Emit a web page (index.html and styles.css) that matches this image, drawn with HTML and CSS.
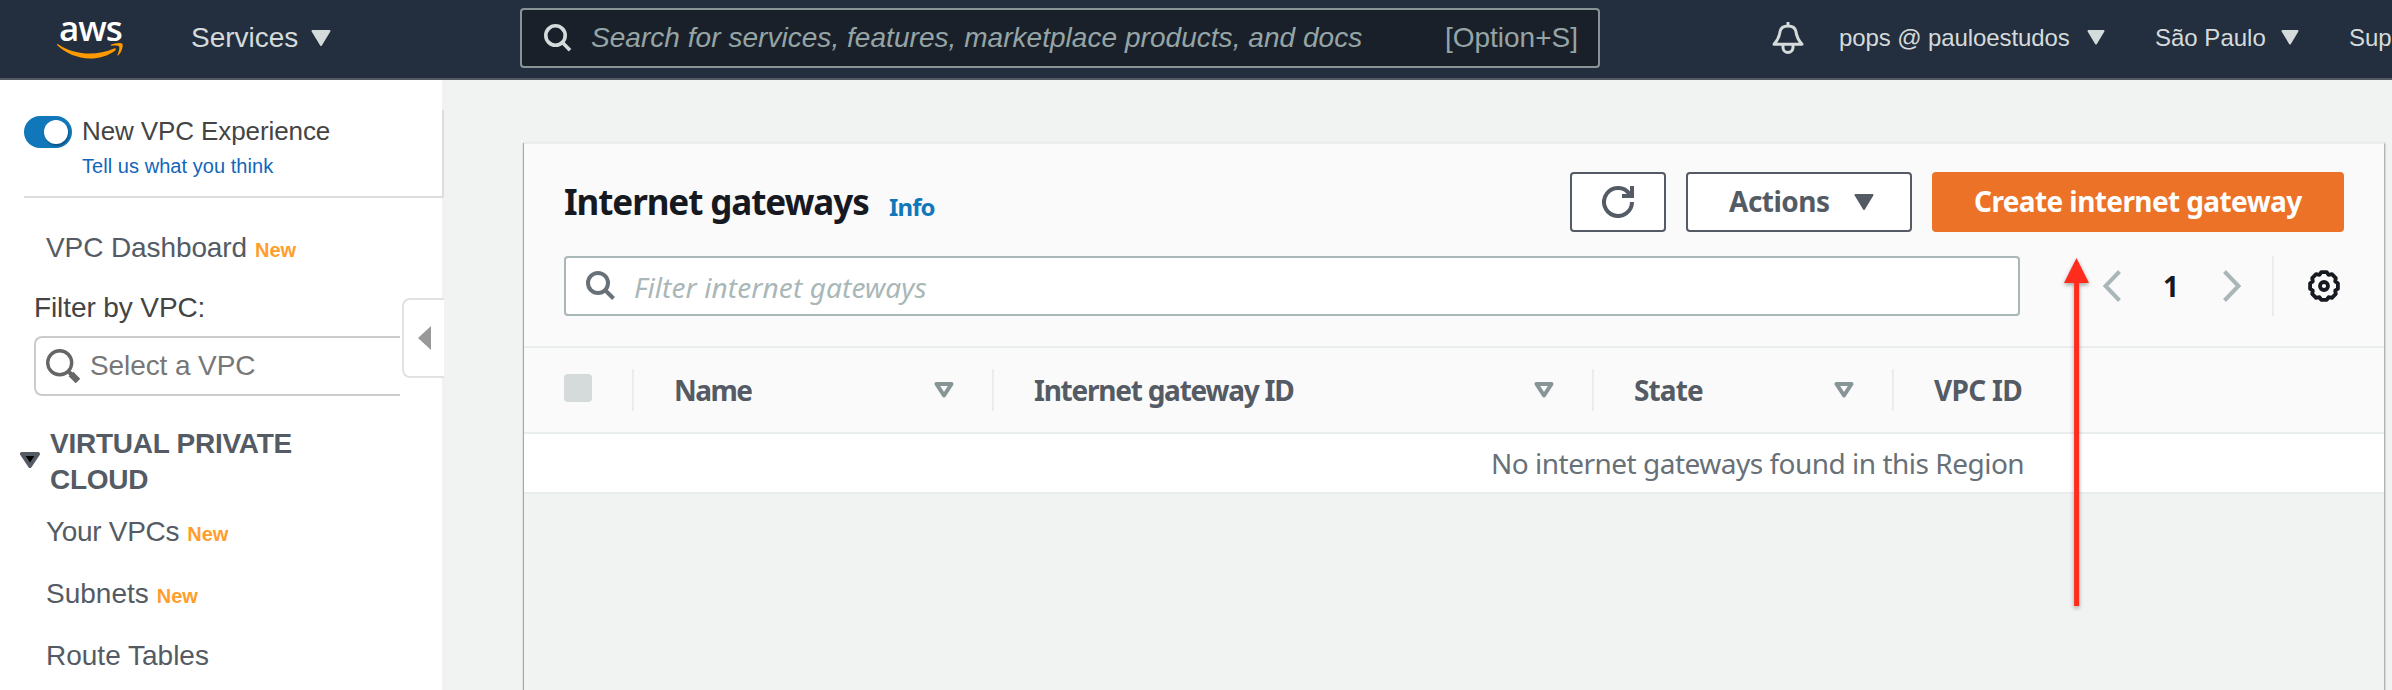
FILE: index.html
```html
<!DOCTYPE html>
<html lang="en">
<head>
<meta charset="utf-8">
<title>Internet gateways | VPC Management Console</title>
<link rel="stylesheet" href="styles.css">
</head>
<body>
<header class="nav">
  <a class="logo">
    <span class="logo-text">aws</span>
    <svg class="logo-smile" width="66" height="16" viewBox="0 0 66 16"><path fill="#f90" d="M.6 1C10 7.5 22 10.6 33 10.600 41 10.600 49.500 8.800 57 5.400c1.500-.6 2.600 1 1.200 2C51 12.800 42 15.400 33 15.400 20.500 15.400 9 10.500.3 2.300-.4 1.500-.1.600.6 1Z"/><path fill="#f90" d="M54 1.800C57 .2 64 -.6 65.300.8c1.300 1.700-.5 8.600-4 11.500-.6.5-1.100.200-.8-.4C61.500 9.500 63 4.600 62 3.400 61 2.100 57 2.500 54.300 2.700c-.7 0-.9-.5-.3-.9Z"/></svg>
  </a>
  <a class="services">Services<svg width="20" height="16" viewBox="0 0 20 16"><path class="caret" d="M1.500 1h17L10 15Z"/></svg></a>
  <div class="search">
    <svg width="28" height="28" viewBox="0 0 28 28" fill="none" stroke="#d5dbdb" stroke-width="3.600"><circle cx="11.500" cy="11.500" r="9.700"/><path d="M18 18l8 8.200"/></svg>
    <span class="search-hint">Search for services, features, marketplace products, and docs</span>
    <span class="search-key">[Option+S]</span>
  </div>
  <svg class="bell" width="32" height="32" viewBox="0 0 32 32" fill="none" stroke="#d5dbdb" stroke-width="3" stroke-linejoin="round"><path d="M16 0v4"/><path d="M2 22.200C6 18 7.500 14 8.200 9 9 5.500 12 4 16 4s7 1.500 7.800 5C24.500 14 26 18 30 22.200Z"/><path d="M11 23v2.500a5 5 0 0 0 10 0V23"/></svg>
  <a class="menu account"><span>pops @ pauloestudos</span><svg width="18" height="15" viewBox="0 0 18 15"><path class="caret" d="M1.500 1h15L9 13.500Z"/></svg></a>
  <a class="menu region"><span>São Paulo</span><svg width="18" height="15" viewBox="0 0 18 15"><path class="caret" d="M1.500 1h15L9 13.500Z"/></svg></a>
  <a class="menu support">Support</a>
</header>
<div class="body">
  <aside class="side">
    <div class="experience">
      <span class="toggle"><span class="knob"></span></span>
      <div>
        <div class="exp-title">New VPC Experience</div>
        <a class="exp-link">Tell us what you think</a>
      </div>
    </div>
    <a class="link dashboard">VPC Dashboard<b class="new">New</b></a>
    <div class="filter-label">Filter by VPC:</div>
    <div class="vpc-select">
      <svg width="34" height="34" viewBox="0 0 34 34" fill="none" stroke="#666"><circle cx="13.700" cy="13.700" r="12" stroke-width="3.400"/><path d="M22.500 22.500l4 4" stroke-width="4"/><path d="M25 25l7 7" stroke-width="6.500"/></svg>
      Select a VPC
    </div>
    <div class="group">
      <svg width="20" height="16" viewBox="0 0 20 16"><path d="M2 2h16L10 14Z" fill="#000" stroke="#545b64" stroke-width="4" stroke-linejoin="round"/></svg>
      <div>VIRTUAL PRIVATE<br>CLOUD</div>
    </div>
    <a class="link item vpcs">Your VPCs<b class="new">New</b></a>
    <a class="link item">Subnets<b class="new">New</b></a>
    <a class="link item">Route Tables</a>
    <div class="collapse"><svg width="13" height="24" viewBox="0 0 13 24"><path d="M13 0v24L0 12Z" fill="#999"/></svg></div>
  </aside>
  <main class="panel">
    <div class="panel-head">
      <div class="title-row">
        <h1>Internet gateways</h1><a class="info">Info</a>
        <button class="btn refresh"><svg width="32" height="32" viewBox="0 0 32 32" fill="none" stroke="#545b64" stroke-width="4"><path d="M30 16A14 14 0 1 1 27.500 8"/><path d="M30 0v10H20"/></svg></button>
        <button class="btn actions"><span>Actions</span><svg width="20" height="16" viewBox="0 0 20 16"><path d="M1.500 1h17L10 15Z" fill="#545b64" stroke="#545b64" stroke-width="2" stroke-linejoin="round"/></svg></button>
        <button class="btn create"><span>Create internet gateway</span></button>
      </div>
      <div class="tool-row">
        <div class="filter">
          <svg width="30" height="30" viewBox="0 0 30 30" fill="none" stroke="#687078" stroke-width="4"><circle cx="12" cy="12" r="10"/><path d="M19 19l8.500 8.500"/></svg>
          <span>Filter internet gateways</span>
        </div>
        <svg class="prev" width="18" height="32" viewBox="0 0 18 32" fill="none" stroke="#aab7b8" stroke-width="4"><path d="M16.500 1.500L2.500 16l14 14.500"/></svg>
        <span class="page">1</span>
        <svg class="next" width="18" height="32" viewBox="0 0 18 32" fill="none" stroke="#aab7b8" stroke-width="4"><path d="M1.500 1.500L15.500 16l-14 14.500"/></svg>
        <div class="gear"><svg width="32" height="32" viewBox="-16 -16 32 32" fill="none" stroke="#16191f" stroke-width="3.800" stroke-linejoin="round"><path d="M-2.700-13.900H2.700L4.600-11.200 7.900-11.800 11.800-7.900 11.200-4.600 13.900-2.700V2.700L11.200 4.600 11.800 7.900 7.900 11.800 4.600 11.200 2.700 13.900H-2.700L-4.600 11.200-7.900 11.800-11.800 7.900-11.200 4.600-13.900 2.700V-2.700L-11.200-4.600-11.800-7.900-7.900-11.800-4.600-11.200Z"/><circle r="4"/></svg></div>
      </div>
    </div>
    <div class="cols">
      <div class="col check"><span class="box"></span></div>
      <div class="col name"><span>Name</span><svg width="20" height="16" viewBox="0 0 20 16"><path class="sort" d="M2.500 2h15L10 13.500Z"/></svg></div>
      <div class="col gateway"><span>Internet gateway ID</span><svg width="20" height="16" viewBox="0 0 20 16"><path class="sort" d="M2.500 2h15L10 13.500Z"/></svg></div>
      <div class="col state"><span>State</span><svg width="20" height="16" viewBox="0 0 20 16"><path class="sort" d="M2.500 2h15L10 13.500Z"/></svg></div>
      <div class="col vpc"><span>VPC ID</span></div>
    </div>
    <div class="empty"><span>No internet gateways found in this Region</span></div>
  </main>
</div>
<svg class="arrow" width="36" height="364" viewBox="0 0 36 364"><path d="M17.500 4L30 29h-9.900v323h-5V29H5Z" fill="#ff2b1c"/></svg>
</body>
</html>
```
FILE: styles.css
```css
* { box-sizing: border-box; }
body {
  margin: 0;
  width: 2392px;
  height: 690px;
  overflow: hidden;
  position: relative;
  background: #f1f3f3;
  font-family: "Liberation Sans", Arial, sans-serif;
  font-size: 28px;
}
svg { display: block; flex: none; }

/* Top navigation */
.nav {
  display: flex;
  align-items: flex-start;
  height: 80px;
  background: #232f3e;
  border-bottom: 2px solid #545b64;
  color: #d5dbdb;
  white-space: nowrap;
  overflow: hidden;
}
.nav > * { flex: none; }
.caret { fill: #d5dbdb; stroke: #d5dbdb; stroke-width: 2; stroke-linejoin: round; }
.logo { width: 66px; margin-left: 57px; padding-top: 9px; }
.logo-text {
  display: block;
  height: 34px;
  padding-left: 2px;
  color: #fff;
  font: 600 35px/38px "Open Sans", sans-serif;
  letter-spacing: -1px;
}
.services { display: flex; align-items: center; gap: 13px; height: 76px; margin-left: 68px; width: 260px; }
.search {
  display: flex;
  align-items: center;
  width: 1080px;
  height: 60px;
  margin: 8px 0 0 69px;
  padding: 0 20px 0 22px;
  border: 2px solid #879596;
  border-radius: 4px;
  background: #1a202a;
  color: #95a5a6;
}
.search-hint { flex: 1; margin-left: 19px; font-style: italic; letter-spacing: .04px; }
.bell { margin: 22px 0 0 172px; }
.menu { display: flex; align-items: center; justify-content: space-between; height: 75px; font-size: 24px; }
.account { width: 266px; margin-left: 35px; letter-spacing: -.1px; }
.region { width: 144px; margin-left: 50px; }
.support { margin-left: 50px; }

/* Sidebar */
.body { display: flex; height: 610px; }
.side { position: relative; display: flow-root; width: 442px; height: 610px; flex: none; background: #fff; color: #545b64; }
.experience {
  display: flex;
  gap: 10px;
  width: 420px;
  height: 88px;
  margin: 30px 0 0 24px;
  border-right: 2px solid #ddd;
  border-bottom: 2px solid #ddd;
  background: #fff;
}
.toggle { width: 48px; height: 32px; margin-top: 6px; padding: 4px; border-radius: 16px; background: #1177bb; }
.knob { display: block; width: 24px; height: 24px; margin-left: 16px; border-radius: 50%; background: #fff; box-shadow: 1px 2px 2px rgba(0,0,0,.3); }
.exp-title { padding-top: 5px; color: #444; font-size: 26px; line-height: 32px; letter-spacing: -.1px; }
.exp-link { display: block; padding-top: 6px; color: #16b; font-size: 20px; line-height: 26px; letter-spacing: .05px; }
.link { display: block; height: 36px; margin-left: 46px; line-height: 36px; }
.new { margin-left: 8px; color: #ff9d2d; font-size: 20px; line-height: 20px; letter-spacing: 0; }
.dashboard { margin-top: 32px; letter-spacing: -.1px; }
.filter-label { margin: 24px 0 0 34px; color: #444; line-height: 36px; letter-spacing: -.1px; }
.vpc-select {
  display: flex;
  align-items: center;
  gap: 10px;
  width: 366px;
  height: 60px;
  margin: 10px 0 0 34px;
  padding-left: 10px;
  border: 2px solid #ccc;
  border-right: 0;
  border-radius: 8px 0 0 8px;
  color: #777;
  letter-spacing: -.1px;
}
.group { display: flex; gap: 10px; margin: 30px 0 0 20px; font-weight: bold; line-height: 36px; letter-spacing: -.25px; }
.group svg { margin-top: 26px; }
.item { margin-top: 16px; }
.vpcs { letter-spacing: -.3px; }
.item + .item { margin-top: 26px; }
.collapse {
  position: absolute;
  left: 402px;
  top: 218px;
  display: flex;
  align-items: center;
  width: 42px;
  height: 80px;
  padding-left: 14px;
  border: 2px solid #e2e2e2;
  border-right: 0;
  border-radius: 8px 0 0 8px;
  background: #fff;
}

/* Content panel */
.panel {
  width: 1860px;
  height: 560px;
  margin: 62px 0 0 82px;
  border-top: 2px solid #eaeded;
  box-shadow: 0 2px 2px rgba(0,28,36,.3), 1px 1px 2px rgba(0,28,36,.3), -1px 1px 1px rgba(0,28,36,.25);
  background: #f1f3f3;
  font-family: "Noto Sans", "Open Sans", sans-serif;
}
.panel-head { height: 204px; padding: 28px 40px 0; border-bottom: 2px solid #eaeded; background: #fafafa; }
.title-row { display: flex; height: 60px; white-space: nowrap; }
h1 { margin: 0; width: 325px; color: #16191f; font-size: 35px; line-height: 60px; letter-spacing: -1.080px; }
.info { flex: 1; color: #1177bb; font-size: 24px; font-weight: bold; line-height: 69px; letter-spacing: -.9px; }
.btn {
  display: flex;
  align-items: center;
  height: 60px;
  border: 2px solid #545b64;
  border-radius: 4px;
  background: #fff;
  color: #545b64;
  font: bold 28px/56px "Noto Sans", sans-serif;
}
.btn span { padding-bottom: 2px; }
.refresh { width: 96px; padding: 0 30px; }
.actions { width: 226px; margin-left: 20px; padding: 0 36px 0 41px; justify-content: space-between; }
.actions span { letter-spacing: -.5px; }
.create { width: 412px; margin-left: 20px; padding: 0 0 0 40px; border-color: #ec7228; background: #ec7228; color: #fff; letter-spacing: -.6px; }
.tool-row { display: flex; height: 60px; margin-top: 24px; align-items: center; }
.filter {
  display: flex;
  align-items: center;
  width: 1456px;
  height: 60px;
  padding-left: 20px;
  border: 2px solid #aab7b8;
  border-radius: 4px;
  background: #fff;
  color: #aab7b8;
  font-style: italic;
}
.filter span { margin-left: 18px; padding-top: 2px; letter-spacing: .1px; }
.prev { margin-left: 83px; }
.page { width: 102px; padding-left: 42px; color: #16191f; font-weight: bold; }
.gear { height: 60px; margin-left: 31px; padding: 14px 0 0 34px; border-left: 2px solid #eaeded; }
.cols { display: flex; align-items: center; height: 86px; padding-left: 40px; border-bottom: 2px solid #eaeded; background: #fafafa; color: #545b64; font-weight: bold; }
.col { display: flex; align-items: center; justify-content: space-between; height: 42px; padding: 0 38px 0 40px; border-left: 2px solid #eaeded; }
.check { width: 68px; padding: 0; border: 0; }
.box { width: 28px; height: 28px; margin-top: -5px; border-radius: 4px; background: #d5dbdb; }
.name { width: 360px; }
.name span { letter-spacing: -1.5px; }
.gateway { width: 600px; }
.gateway span { letter-spacing: -1.240px; }
.state { width: 300px; }
.state span { letter-spacing: -.9px; }
.vpc span { letter-spacing: -.7px; }
.sort { fill: #fafafa; stroke: #879596; stroke-width: 4; stroke-linejoin: round; }
.empty { height: 60px; padding-left: 967px; border-bottom: 2px solid #eaeded; background: #fff; color: #687078; line-height: 58px; letter-spacing: -.5px; }

/* Annotation */
.arrow { position: absolute; left: 2059px; top: 254px; filter: drop-shadow(0 2px 2px rgba(0,0,0,.35)); }
```
